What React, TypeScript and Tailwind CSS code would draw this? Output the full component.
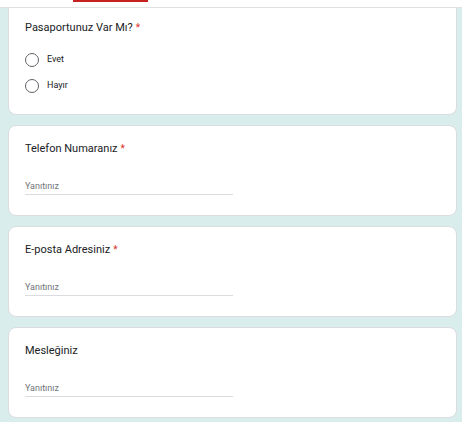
const font = { fontFamily: "Roboto, 'Noto Sans', Arial, sans-serif" };

interface Question {
  title: string;
  required?: boolean;
}

const textQuestions: Question[] = [
  { title: "Telefon Numaranız", required: true },
  { title: "E-posta Adresiniz", required: true },
  { title: "Mesleğiniz" },
];

const QuestionTitle = ({ title, required }: Question) => (
  <div className="h-[16px] text-[11px] leading-[16px] text-[#202124]">
    {title}
    {required && <span className="ml-[3px] text-[10px] text-[#d93025]">*</span>}
  </div>
);

const Radio = ({ label }: { label: string }) => (
  <label className="flex h-[26px] items-center gap-[8px]">
    <span className="h-[14px] w-[14px] rounded-full border-[1.5px] border-[#5f6368]" />
    <span className="text-[9px] text-[#202124]">{label}</span>
  </label>
);

export default function App() {
  return (
    <div style={font} className="min-h-[422px] w-[462px] bg-[#d9eeec]">
      <div className="relative h-[8px] border-b border-[#e0e0e0] bg-white">
        <div className="absolute left-[73px] top-0 h-[2px] w-[75px] bg-[#c5221f]" />
      </div>

      <div className="flex flex-col gap-[10px] pl-[8px] pr-[5px]">
        <section className="rounded-b-lg border-x border-b border-[#dadce0] bg-white px-[16px] pb-[15px] pt-[12px]">
          <QuestionTitle title="Pasaportunuz Var Mı?" required />
          <div className="mt-[11px] flex flex-col">
            <Radio label="Evet" />
            <Radio label="Hayır" />
          </div>
        </section>

        {textQuestions.map((q) => (
          <section
            key={q.title}
            className="rounded-lg border border-[#dadce0] bg-white px-[16px] pb-[20px] pt-[15px]"
          >
            <QuestionTitle {...q} />
            <div className="mt-[23px] w-[208px] border-b border-[#dadce0] pb-[2px]">
              <div className="h-[12px] text-[9px] leading-[12px] text-[#70757a]">Yanıtınız</div>
            </div>
          </section>
        ))}
      </div>
    </div>
  );
}
